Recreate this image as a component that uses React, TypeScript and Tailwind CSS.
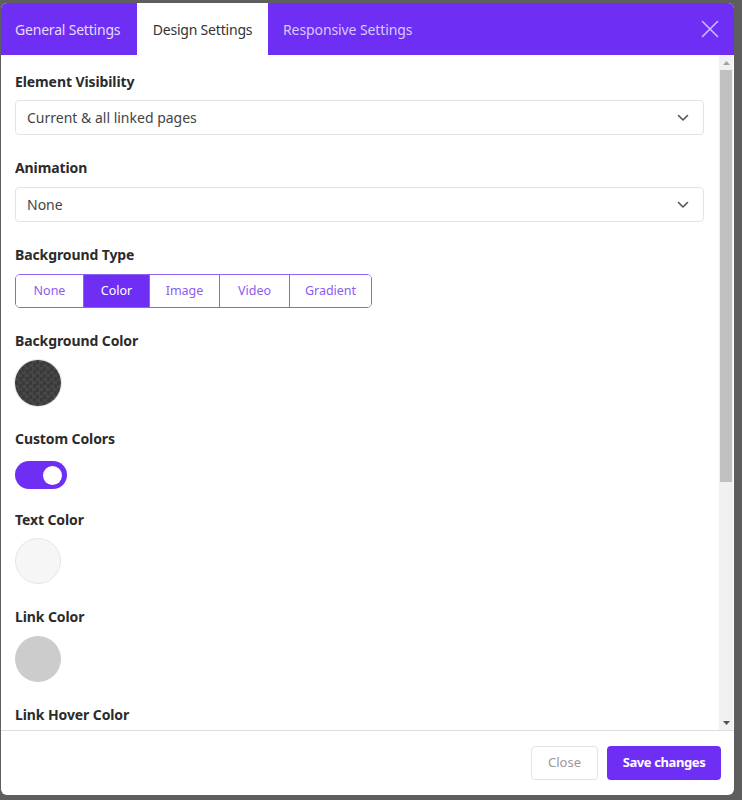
import React from "react";

const Label = ({ children, className = "" }: { children: React.ReactNode; className?: string }) => (
  <div className={`text-[14px] font-bold leading-5 tracking-[-0.1px] text-[#2b2b2b] ${className}`}>{children}</div>
);

const Chevron = () => (
  <svg width="12" height="8" viewBox="0 0 12 8" fill="none">
    <path d="M1.5 1.5L6 6L10.5 1.5" stroke="#555" strokeWidth="1.6" strokeLinecap="round" strokeLinejoin="round" />
  </svg>
);

const Select = ({ value }: { value: string }) => (
  <div className="flex h-[35px] items-center justify-between rounded-[4px] border border-[#e3e3e3] bg-white pl-[11px] pr-[14px]">
    <span className="text-[14px] text-[#444]">{value}</span>
    <Chevron />
  </div>
);

export default function App() {
  const segs = [
    { t: "None", w: "w-[67px]" },
    { t: "Color", w: "w-[66px]", active: true },
    { t: "Image", w: "w-[70px]" },
    { t: "Video", w: "w-[70px]" },
    { t: "Gradient", w: "w-[82px]" },
  ];
  return (
    <div
      className="h-[800px] w-[742px] overflow-hidden bg-[#5e5e5e] pl-[1px] pt-[3px]"
      style={{ fontFamily: '"Noto Sans", "Open Sans", sans-serif' }}
    >
      <div className="flex h-[792px] w-[733px] flex-col overflow-hidden rounded-[6px] bg-white">
        {/* Header */}
        <div className="flex h-[52px] shrink-0 items-stretch bg-[#6e2ef4]">
          <div className="flex w-[136px] items-center pl-[14px] text-[14px] tracking-[-0.2px] text-[#e6dcff]">General Settings</div>
          <div className="flex w-[131px] items-center justify-center bg-white text-[14px] tracking-[-0.2px] text-[#333]">Design Settings</div>
          <div className="flex items-center pl-[15px] text-[14px] tracking-[-0.1px] text-[#d9c9ff]">Responsive Settings</div>
          <div className="flex-1" />
          <div className="flex items-center pr-[15px]">
            <svg width="18" height="18" viewBox="0 0 18 18" fill="none">
              <path d="M1.5 1.5L16.5 16.5M16.5 1.5L1.5 16.5" stroke="#cdb9ff" strokeWidth="1.6" strokeLinecap="round" />
            </svg>
          </div>
        </div>

        {/* Body */}
        <div className="flex min-h-0 flex-1">
          <div className="min-w-0 flex-1 overflow-hidden pl-[14px] pr-[15px] pt-[17px]">
            <Label className="mb-[8px]">Element Visibility</Label>
            <Select value="Current & all linked pages" />

            <Label className="mb-[9px] mt-[23px]">Animation</Label>
            <Select value="None" />

            <Label className="mb-[9px] mt-[23px]">Background Type</Label>
            <div className="flex h-[34px] w-fit overflow-hidden rounded-[5px] border border-[#8d62f2]">
              {segs.map((s, i) => (
                <div
                  key={s.t}
                  className={`flex items-center justify-center text-[12.5px] ${s.w} ${i > 0 ? "border-l border-[#8d62f2]" : ""} ${
                    s.active ? "bg-[#6e2ef4] text-white" : "bg-white text-[#8a5cf0]"
                  }`}
                >
                  {s.t}
                </div>
              ))}
            </div>

            <Label className="mb-[9px] mt-[23px]">Background Color</Label>
            <div className="h-[46px] w-[46px] rounded-full bg-[repeating-conic-gradient(#474747_0%_25%,#3a3a3a_0%_50%)] bg-[length:7px_7px] shadow-[0_0_0_1px_#e5e5e5]" />

            <Label className="mb-[12px] mt-[23px]">Custom Colors</Label>
            <div className="flex h-[28px] w-[52px] items-center justify-end rounded-full bg-[#6e2ef4] pr-[5px]">
              <div className="h-[19px] w-[19px] rounded-full bg-white" />
            </div>

            <Label className="mb-[8px] mt-[21px]">Text Color</Label>
            <div className="h-[46px] w-[46px] rounded-full border border-[#e6e6e6] bg-[#f6f6f6]" />

            <Label className="mb-[9px] mt-[23px]">Link Color</Label>
            <div className="h-[46px] w-[46px] rounded-full bg-[#cccccc]" />

            <Label className="mt-[23px]">Link Hover Color</Label>
          </div>

          {/* Scrollbar */}
          <div className="mr-[1px] flex w-[14px] shrink-0 flex-col bg-[#f1f1f1]">
            <div className="flex h-[15px] items-center justify-center">
              <svg width="7" height="4" viewBox="0 0 7 4"><path d="M0 4L3.5 0L7 4Z" fill="#a3a3a3" /></svg>
            </div>
            <div className="mx-[1px] h-[412px] bg-[#c1c1c1]" />
            <div className="flex-1" />
            <div className="flex h-[15px] items-center justify-center">
              <svg width="7" height="4" viewBox="0 0 7 4"><path d="M0 0L7 0L3.5 4Z" fill="#505050" /></svg>
            </div>
          </div>
        </div>

        {/* Footer */}
        <div className="flex h-[65px] shrink-0 items-center justify-end gap-[9px] border-t border-[#dedede] pr-[13px]">
          <div className="flex h-[34px] w-[67px] items-center justify-center rounded-[4px] border border-[#e3e3e3] text-[13px] text-[#9a9a9a]">
            Close
          </div>
          <div className="flex h-[34px] w-[114px] items-center justify-center rounded-[4px] bg-[#6e2ef4] text-[13px] font-bold tracking-[-0.4px] text-white">
            Save changes
          </div>
        </div>
      </div>
    </div>
  );
}
